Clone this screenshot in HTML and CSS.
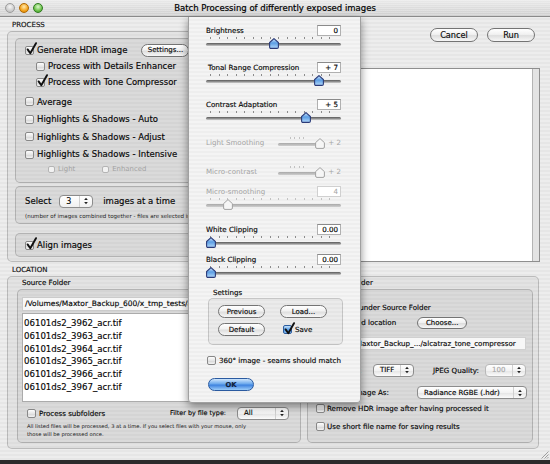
FILE: index.html
```html
<!DOCTYPE html>
<html>
<head>
<meta charset="utf-8">
<link rel="stylesheet" href="styles.css">
</head>
<body>

<svg class="defs" width="0" height="0">
	<defs>
		<linearGradient id="thumbFill" x1="0" y1="0" x2="0" y2="1">
			<stop offset="0" stop-color="#d6ebff"/>
			<stop offset="0.45" stop-color="#5b9de3"/>
			<stop offset="1" stop-color="#b4dafc"/>
		</linearGradient>
	</defs>
	<symbol id="tick" viewBox="0 0 11 13">
		<path d="M1.6 7.4 L4.3 11.3 L10 1.2" fill="none" stroke="#111" stroke-width="1.9" stroke-linecap="round" stroke-linejoin="round"/>
	</symbol>
	<symbol id="thumb" viewBox="0 0 10 11">
		<path d="M5 0.6 L9.4 4.6 V9 Q9.4 10.4 8 10.4 H2 Q0.6 10.4 0.6 9 V4.6 Z" fill="url(#thumbFill)" stroke="#2a3a78" stroke-width="1.1"/>
	</symbol>
	<symbol id="thumbOff" viewBox="0 0 10 11">
		<path d="M5 0.6 L9.4 4.6 V9 Q9.4 10.4 8 10.4 H2 Q0.6 10.4 0.6 9 V4.6 Z" fill="#f6f6f6" stroke="#a2a2a2" stroke-width="1"/>
	</symbol>
	<symbol id="updown" viewBox="0 0 5 9">
		<path d="M2.5 0.3 L4.8 3.4 H0.2 Z M2.5 8.7 L4.8 5.6 H0.2 Z" fill="#222"/>
	</symbol>
</svg>

<div class="window">

	<div class="titlebar">
		<div class="lights">
			<span class="light light-close"></span>
			<span class="light light-min"></span>
			<span class="light light-zoom"></span>
		</div>
		<div class="title">Batch Processing of differently exposed images</div>
		<div></div>
	</div>

	<div class="top">
		<div class="process-col">
			<div class="sec-label">PROCESS</div>
			<div class="group process-group">

				<div class="group box-methods">
					<div class="opt">
						<span class="cb"><svg class="tick"><use href="#tick"/></svg></span>
						<span>Generate HDR image</span>
						<span class="btn btn-settings">Settings...</span>
					</div>
					<div class="opt opt-sub">
						<span class="cb"></span>
						<span>Process with Details Enhancer</span>
					</div>
					<div class="opt opt-sub">
						<span class="cb"><svg class="tick"><use href="#tick"/></svg></span>
						<span>Process with Tone Compressor</span>
					</div>
					<div class="opt-list">
						<div class="opt opt-tall"><span class="cb"></span><span>Average</span></div>
						<div class="opt opt-tall"><span class="cb"></span><span>Highlights &amp; Shadows - Auto</span></div>
						<div class="opt opt-tall"><span class="cb"></span><span>Highlights &amp; Shadows - Adjust</span></div>
						<div class="opt opt-tall"><span class="cb"></span><span>Highlights &amp; Shadows - Intensive</span></div>
					</div>
					<div class="opt-mini">
						<span class="cb cb-mini"></span><span>Light</span>
						<span class="cb cb-mini enhanced"></span><span>Enhanced</span>
					</div>
				</div>

				<div class="group box-count">
					<div class="count-row">
						<span>Select</span>
						<span class="stepper"><span class="pv">3</span><span class="arr"><svg><use href="#updown"/></svg></span></span>
						<span>images at a time</span>
					</div>
					<div class="note">(number of images combined together - files are selected in alphabetical order)</div>
				</div>

				<div class="group box-align">
					<div class="opt">
						<span class="cb"><svg class="tick"><use href="#tick"/></svg></span>
						<span>Align images</span>
					</div>
				</div>

			</div>
		</div>

		<div class="side-col">
			<div class="actions">
				<span class="btn btn-lg">Cancel</span>
				<span class="btn btn-lg">Run</span>
			</div>
			<div class="preview"><div class="preview-bar"></div></div>
		</div>
	</div>

	<div class="bottom">
		<div class="sec-label loc-label">LOCATION</div>
		<div class="group location-group">

			<div class="loc-col source-col">
				<div class="sub-label">Source Folder</div>
				<div class="group source-box">
					<div class="path-field">/Volumes/Maxtor_Backup_600/x_tmp_tests/alcatraz</div>
					<div class="file-list">
						<div class="list-row">06101ds2_3962_acr.tif</div>
						<div class="list-row">06101ds2_3963_acr.tif</div>
						<div class="list-row">06101ds2_3964_acr.tif</div>
						<div class="list-row">06101ds2_3965_acr.tif</div>
						<div class="list-row">06101ds2_3966_acr.tif</div>
						<div class="list-row">06101ds2_3967_acr.tif</div>
					</div>
					<div class="src-opts">
						<span class="cb"></span>
						<span class="src-sub">Process subfolders</span>
						<span class="filter-label">Filter by file type:</span>
						<span class="popup popup-all"><span class="pv">All</span><span class="arr"><svg><use href="#updown"/></svg></span></span>
					</div>
					<div class="note-src">All listed files will be processed, 3 at a time. If you select files with your mouse, only<br>those will be processed once.</div>
				</div>
			</div>

			<div class="loc-col dest-col">
				<div class="sub-label dest-label">Destination Folder</div>
				<div class="group dest-box">
					<div class="radio-row"><span class="radio on"></span><span>Folder under Source Folder</span></div>
					<div class="radio-row radio-tall"><span class="radio"></span><span>Selected location</span><span class="btn btn-choose">Choose...</span></div>
					<div class="dest-path">/Volumes/Maxtor_Backup_.../alcatraz_tone_compressor</div>
					<div class="fmt-row">
						<span class="fmt-label">Format:</span>
						<span class="popup popup-tiff"><span class="pv">TIFF</span><span class="arr"><svg><use href="#updown"/></svg></span></span>
						<span class="jpeg-label">JPEG Quality:</span>
						<span class="popup popup-off"><span class="pv">100</span><span class="arr"><svg><use href="#updown"/></svg></span></span>
					</div>
					<div class="as-row">
						<span class="as-label">Save image As:</span>
						<span class="popup popup-hdr"><span class="pv">Radiance RGBE (.hdr)</span><span class="arr"><svg><use href="#updown"/></svg></span></span>
					</div>
					<div class="opt chk-row"><span class="cb"></span><span>Remove HDR image after having processed it</span></div>
					<div class="opt chk-row chk-last"><span class="cb"></span><span>Use short file name for saving results</span></div>
				</div>
			</div>

		</div>
	</div>

	<svg class="grip" viewBox="0 0 10 10">
		<path d="M9.5 2.5 L2.5 9.5 M9.5 5.5 L5.5 9.5 M9.5 8 L8 9.5" stroke="#8a8a8a" stroke-width="0.8"/>
	</svg>

	<div class="sheet">

		<div class="s-group s-main">
			<div class="s-block">
				<div class="s-head"><span>Brightness</span><span class="val">0</span></div>
				<div class="slider"><div class="ticks"></div><div class="track"></div><svg class="thumb" style="left:68px"><use href="#thumb"/></svg></div>
			</div>
			<div class="s-block">
				<div class="s-head"><span class="tonal">Tonal Range Compression</span><span class="val">+ 7</span></div>
				<div class="slider"><div class="ticks"></div><div class="track"></div><svg class="thumb" style="left:113px"><use href="#thumb"/></svg></div>
			</div>
			<div class="s-block">
				<div class="s-head"><span>Contrast Adaptation</span><span class="val">+ 5</span></div>
				<div class="slider"><div class="ticks"></div><div class="track"></div><svg class="thumb" style="left:100px"><use href="#thumb"/></svg></div>
			</div>
		</div>

		<div class="s-group s-detail">
			<div class="inline-row">
				<span class="il-label">Light Smoothing</span>
				<div class="mini-slider"><div class="ticks ticks-off"></div><div class="track track-off"></div><svg class="thumb" style="left:42px"><use href="#thumbOff"/></svg></div>
				<span class="il-val">+ 2</span>
			</div>
			<div class="inline-row">
				<span class="il-label">Micro-contrast</span>
				<div class="mini-slider"><div class="ticks ticks-off"></div><div class="track track-off"></div><svg class="thumb" style="left:42px"><use href="#thumbOff"/></svg></div>
				<span class="il-val">+ 2</span>
			</div>
			<div class="s-block s-off">
				<div class="s-head"><span>Micro-smoothing</span><span class="val">4</span></div>
				<div class="slider"><div class="ticks ticks-off"></div><div class="track track-off"></div><svg class="thumb" style="left:22px"><use href="#thumbOff"/></svg></div>
			</div>
		</div>

		<div class="s-group s-clip">
			<div class="s-block">
				<div class="s-head"><span>White Clipping</span><span class="val">0.00</span></div>
				<div class="slider"><div class="ticks"></div><div class="track"></div><svg class="thumb" style="left:5px"><use href="#thumb"/></svg></div>
			</div>
			<div class="s-block">
				<div class="s-head"><span>Black Clipping</span><span class="val">0.00</span></div>
				<div class="slider"><div class="ticks"></div><div class="track"></div><svg class="thumb" style="left:5px"><use href="#thumb"/></svg></div>
			</div>
		</div>

		<div class="settings-label">Settings</div>
		<div class="settings-box">
			<div class="set-row">
				<span class="btn btn-sm">Previous</span>
				<span class="btn btn-sm">Load...</span>
			</div>
			<div class="set-row">
				<span class="btn btn-sm">Default</span>
				<span class="save"><span class="cb cb-blue"><svg class="tick"><use href="#tick"/></svg></span><span>Save</span></span>
			</div>
		</div>

		<div class="sheet-check"><span class="cb"></span><span>360° image - seams should match</span></div>

		<div class="btn btn-ok">OK</div>
	</div>

</div>
</body>
</html>
```

FILE: styles.css
```css
body {
	margin: 0;
	background: #2c2c2c;
	font-family: "DejaVu Sans", Verdana, sans-serif;
	color: #050505;
	-webkit-text-stroke: 0.15px;
}

.defs {
	position: absolute;
	width: 0;
	height: 0;
}

.window {
	position: relative;
	width: 550px;
	height: 460px;
	overflow: hidden;
	background: repeating-linear-gradient(180deg, #ededed 0, #ededed 2px, #e6e6e6 2px, #e6e6e6 4px);
}

/* title bar */

.titlebar {
	display: grid;
	grid-template-columns: 60px 1fr 60px;
	align-items: center;
	height: 16px;
	border-bottom: 1px solid #8a8a8a;
	background: repeating-linear-gradient(180deg, rgba(255, 255, 255, 0.25) 0, rgba(255, 255, 255, 0.25) 1px, transparent 1px, transparent 2px), linear-gradient(#eaeaea, #cfcfcf);
}

.lights {
	display: flex;
	gap: 4px;
	padding-left: 5px;
}

.light {
	width: 10px;
	height: 10px;
	border-radius: 50%;
	box-sizing: border-box;
}

.light-close {
	background: radial-gradient(circle at 50% 35%, #f6f6f6, #c6c6c6 70%);
	border: 1px solid #9c9c9c;
}

.light-min {
	background: radial-gradient(circle at 50% 35%, #ffeab0, #f3a31c 60%, #d17e00);
	border: 1px solid #b06800;
}

.light-zoom {
	background: radial-gradient(circle at 50% 35%, #dcf7cc, #6cc24a 60%, #3f962a);
	border: 1px solid #2f7a1f;
}

.title {
	text-align: center;
	font-size: 8.5px;
	color: #000;
	-webkit-text-stroke: 0.2px;
}

/* shared bits */

.group {
	box-sizing: border-box;
	border: 1px solid rgba(0, 0, 0, 0.18);
	border-radius: 5px;
	background: rgba(0, 0, 0, 0.04);
}

.sec-label {
	font-size: 7px;
	line-height: 11px;
	height: 11px;
	padding-left: 5px;
	color: #111;
}

.cb {
	position: relative;
	flex: none;
	box-sizing: border-box;
	width: 9px;
	height: 9px;
	border: 1px solid #888;
	border-radius: 2px;
	background: linear-gradient(#fdfdfd, #e6e6e6 50%, #d6d6d6 56%, #f4f4f4);
}

.cb-mini {
	width: 7px;
	height: 7px;
	border-color: #b4b4b4;
	background: #f2f2f2;
}

.cb-blue {
	border-color: #2c5c9e;
	background: linear-gradient(#c4e2fc, #4f98e6 55%, #86bdf3);
}

.tick {
	position: absolute;
	left: -0.5px;
	top: -4.5px;
	width: 11px;
	height: 13px;
	overflow: visible;
}

.radio {
	flex: none;
	box-sizing: border-box;
	width: 9px;
	height: 9px;
	border: 1px solid #888;
	border-radius: 50%;
	background: linear-gradient(#fdfdfd, #dadada);
}

.radio.on {
	background: radial-gradient(circle, #222 0 1.6px, #8fc2f4 2px, #3f86d8);
	border-color: #2c5c9e;
}

.btn {
	display: flex;
	align-items: center;
	justify-content: center;
	flex: none;
	box-sizing: border-box;
	height: 13px;
	border: 1px solid #747474;
	border-radius: 7px;
	background: linear-gradient(#ffffff, #f1f1f1 45%, #dedede 55%, #f7f7f7);
	font-size: 7px;
	color: #0a0a0a;
}

.popup {
	display: flex;
	align-items: center;
	flex: none;
	box-sizing: border-box;
	height: 13px;
	padding-left: 6px;
	border: 1px solid #8c8c8c;
	border-radius: 4px;
	background: linear-gradient(#ffffff, #f3f3f3 50%, #e6e6e6 56%, #fbfbfb);
	font-size: 7px;
}

.popup .pv,
.stepper .pv {
	flex: 1;
}

.popup .arr,
.stepper .arr {
	display: flex;
	align-items: center;
	justify-content: center;
	width: 12px;
	height: 100%;
	border-left: 1px solid #d0d0d0;
}

.arr svg {
	width: 4px;
	height: 8px;
}

/* top area */

.top {
	display: flex;
	gap: 4px;
	height: 245px;
	box-sizing: border-box;
	padding: 3px 0 0 7px;
}

.process-col {
	width: 349px;
}

.process-group {
	height: 231px;
	padding: 6px 6px 0 7px;
}

.opt {
	display: flex;
	align-items: center;
	gap: 3px;
	height: 16px;
	font-size: 8.5px;
}

.box-methods {
	height: 145px;
	padding: 3px 0 0 9px;
}

.opt-sub {
	padding-left: 11px;
}

.btn-settings {
	width: 48px;
	margin-left: 11px;
}

.opt-list {
	margin-top: 3px;
}

.opt-tall {
	height: 17.5px;
}

.opt-mini {
	display: flex;
	align-items: center;
	gap: 3px;
	height: 12px;
	padding-left: 23px;
	font-size: 6.9px;
	color: #a2a2a2;
	-webkit-text-stroke: 0;
}

.opt-mini .enhanced {
	margin-left: 24px;
}

.box-count {
	height: 38px;
	margin-top: 3px;
	padding: 6px 0 0 9px;
}

.count-row {
	display: flex;
	align-items: center;
	height: 16px;
	font-size: 8.5px;
}

.stepper {
	display: flex;
	align-items: center;
	box-sizing: border-box;
	width: 34px;
	height: 13px;
	margin: 0 10px 0 8px;
	padding-left: 6px;
	border: 1px solid #8c8c8c;
	border-radius: 4px;
	background: linear-gradient(#ffffff, #f0f0f0);
	font-size: 8px;
}

.note {
	margin-top: 3px;
	font-size: 5.5px;
	line-height: 8px;
	white-space: nowrap;
	color: #1a1a1a;
	-webkit-text-stroke: 0;
}

.box-align {
	display: flex;
	align-items: center;
	height: 24px;
	margin-top: 9px;
	padding-left: 9px;
}

.side-col {
	display: flex;
	flex-direction: column;
	width: 180px;
}

.actions {
	display: flex;
	justify-content: flex-end;
	gap: 9px;
	margin-top: 8px;
	padding-right: 5px;
}

.btn-lg {
	width: 48px;
	height: 14px;
	font-size: 8.2px;
}

.preview {
	display: flex;
	justify-content: flex-end;
	box-sizing: border-box;
	height: 194px;
	margin-top: 26px;
	border: 1px solid #8e8e8e;
	background: #fff;
}

.preview-bar {
	width: 6px;
	background: #e3e3e3;
	border-left: 1px solid #b4b4b4;
}

/* location */

.bottom {
	padding-left: 7px;
}

.loc-label {
	height: 12px;
	line-height: 12px;
	padding-top: 2px;
}

.location-group {
	display: flex;
	gap: 6px;
	width: 532px;
	height: 173px;
	padding: 0 5px 0 9px;
}

.loc-col {
	display: flex;
	flex-direction: column;
}

.source-col {
	width: 284px;
}

.dest-col {
	width: 226px;
}

.sub-label {
	height: 12px;
	line-height: 12px;
	padding-left: 5px;
	font-size: 7.1px;
}

.dest-label {
	padding-left: 1px;
}

.source-box {
	height: 154px;
	padding: 7px 4px 0 4px;
}

.path-field {
	box-sizing: border-box;
	height: 14px;
	padding-left: 2px;
	border: 1px solid #cbcbcb;
	background: #f7f7f7;
	font-size: 7.5px;
	line-height: 12px;
	white-space: nowrap;
	overflow: hidden;
}

.file-list {
	box-sizing: border-box;
	height: 89px;
	margin-top: 2px;
	padding-top: 3px;
	border: 1px solid #ababab;
	background: #fff;
	font-size: 8.6px;
	line-height: 12.8px;
}

.list-row {
	padding-left: 1px;
}

.src-opts {
	display: flex;
	align-items: center;
	gap: 3px;
	height: 14px;
	margin-top: 4px;
	padding: 0 7px 0 5px;
	font-size: 7.1px;
}

.filter-label {
	margin-left: auto;
	margin-right: 8px;
	font-size: 6.4px;
}

.popup-all {
	width: 52px;
}

.note-src {
	margin-top: 3px;
	padding-left: 5px;
	font-size: 5.2px;
	line-height: 7.5px;
	white-space: nowrap;
	color: #1a1a1a;
	-webkit-text-stroke: 0;
}

.dest-box {
	height: 154px;
	padding: 10px 0 0 8px;
	font-size: 7.1px;
}

.radio-row {
	display: flex;
	align-items: center;
	gap: 4px;
	height: 14px;
	padding-left: 6px;
}

.radio-tall {
	height: 17px;
}

.btn-choose {
	width: 50px;
	height: 12px;
	margin-left: 17px;
}

.dest-path {
	box-sizing: border-box;
	height: 13px;
	margin: 6px 6px 0 3px;
	padding-left: 1px;
	border: 1px solid #d0d0d0;
	background: #f7f7f7;
	line-height: 11px;
	white-space: nowrap;
	overflow: hidden;
}

.fmt-row {
	display: flex;
	align-items: center;
	height: 16px;
	margin-top: 12px;
}

.fmt-label {
	width: 57px;
	padding-left: 18px;
	box-sizing: border-box;
}

.popup-tiff {
	width: 41px;
}

.jpeg-label {
	width: 52px;
	margin-left: 19px;
}

.popup-off {
	width: 41px;
	border-color: #b8b8b8;
	color: #a8a8a8;
}

.as-row {
	display: flex;
	align-items: center;
	height: 15px;
	margin-top: 7px;
}

.as-label {
	width: 101px;
	padding-left: 18px;
	box-sizing: border-box;
}

.popup-hdr {
	width: 110px;
}

.chk-row {
	height: 14px;
	margin-top: 1px;
	font-size: 7.1px;
	gap: 2px;
}

.chk-last {
	margin-top: 4px;
}

.grip {
	position: absolute;
	right: 1px;
	bottom: 1px;
	width: 10px;
	height: 10px;
}

/* the adjustment sheet */

.sheet {
	position: absolute;
	left: 188px;
	top: 17px;
	width: 173px;
	height: 386px;
	box-sizing: border-box;
	padding: 7px 19px 0 17px;
	background: repeating-linear-gradient(180deg, #f4f4f4 0, #f4f4f4 2px, #eeeeee 2px, #eeeeee 4px);
	border: 1px solid #a0a0a0;
	border-top: none;
	border-radius: 0 0 4px 4px;
	box-shadow: 0 3px 9px rgba(0, 0, 0, 0.45);
	font-size: 7.1px;
}

.s-group {
	display: flex;
	flex-direction: column;
}

.s-main {
	gap: 13px;
}

.s-head {
	display: flex;
	justify-content: space-between;
	align-items: center;
	height: 12px;
}

.tonal {
	padding-left: 2px;
}

.val {
	box-sizing: border-box;
	width: 24px;
	height: 11px;
	padding-right: 2px;
	border: 1px solid #b0b0b0;
	border-top-color: #8a8a8a;
	background: #fff;
	text-align: right;
	line-height: 9px;
}

.slider {
	position: relative;
	height: 12px;
}

.ticks {
	position: absolute;
	left: 4px;
	right: 4px;
	top: 1px;
	height: 2px;
	background: repeating-linear-gradient(90deg, #8c8c8c 0, #8c8c8c 1px, transparent 1px, transparent 8.53px);
}

.ticks-off {
	background: repeating-linear-gradient(90deg, #c2c2c2 0, #c2c2c2 1px, transparent 1px, transparent 8.53px);
}

.track {
	position: absolute;
	left: 0;
	right: 0;
	top: 7px;
	height: 3px;
	border-radius: 2px;
	background: linear-gradient(#5a5a5a, #969696 60%, #d0d0d0);
}

.track-off {
	background: linear-gradient(#a8a8a8, #cfcfcf);
}

.thumb {
	position: absolute;
	top: 2px;
	width: 10px;
	height: 11px;
	margin-left: -5px;
}

.s-detail {
	margin-top: 14px;
	color: #a4a4a4;
	-webkit-text-stroke: 0;
}

.inline-row {
	display: flex;
	align-items: center;
	height: 12px;
}

.inline-row + .inline-row {
	margin-top: 17px;
}

.inline-row + .s-block {
	margin-top: 8px;
}

.il-label {
	width: 73px;
}

.mini-slider {
	position: relative;
	width: 45px;
	height: 12px;
	margin-right: 5px;
}

.mini-slider .ticks {
	left: 12px;
	right: 14px;
	background: repeating-linear-gradient(90deg, #c2c2c2 0, #c2c2c2 1px, transparent 1px, transparent 4.5px);
}

.il-val {
	width: 14px;
	text-align: right;
}

.s-off .val {
	border-color: #d0d0d0;
	color: #a4a4a4;
}

.s-clip {
	gap: 6px;
	margin-top: 14px;
}

.settings-label {
	height: 11px;
	line-height: 11px;
	margin-top: 10px;
	padding-left: 7px;
}

.settings-box {
	box-sizing: border-box;
	width: 135px;
	height: 47px;
	margin-left: 2px;
	padding: 6px 0 0 9px;
	border: 1px solid rgba(0, 0, 0, 0.16);
	border-radius: 5px;
	background: rgba(0, 0, 0, 0.035);
}

.set-row {
	display: flex;
	align-items: center;
	gap: 15px;
	height: 13px;
}

.set-row + .set-row {
	margin-top: 5px;
}

.btn-sm {
	width: 47px;
}

.save {
	display: flex;
	align-items: center;
	gap: 3px;
	margin-left: 3px;
}

.sheet-check {
	display: flex;
	align-items: center;
	gap: 3px;
	height: 12px;
	margin: 9px 0 0 1px;
}

.btn-ok {
	width: 46px;
	margin: 12px 0 0 2px;
	border-color: #2a5aa0;
	background: linear-gradient(#cfe6fd, #6aa8ec 45%, #3d82df 55%, #9ccdf9);
	font-weight: bold;
	font-size: 6.8px;
	color: #10203a;
}
```
